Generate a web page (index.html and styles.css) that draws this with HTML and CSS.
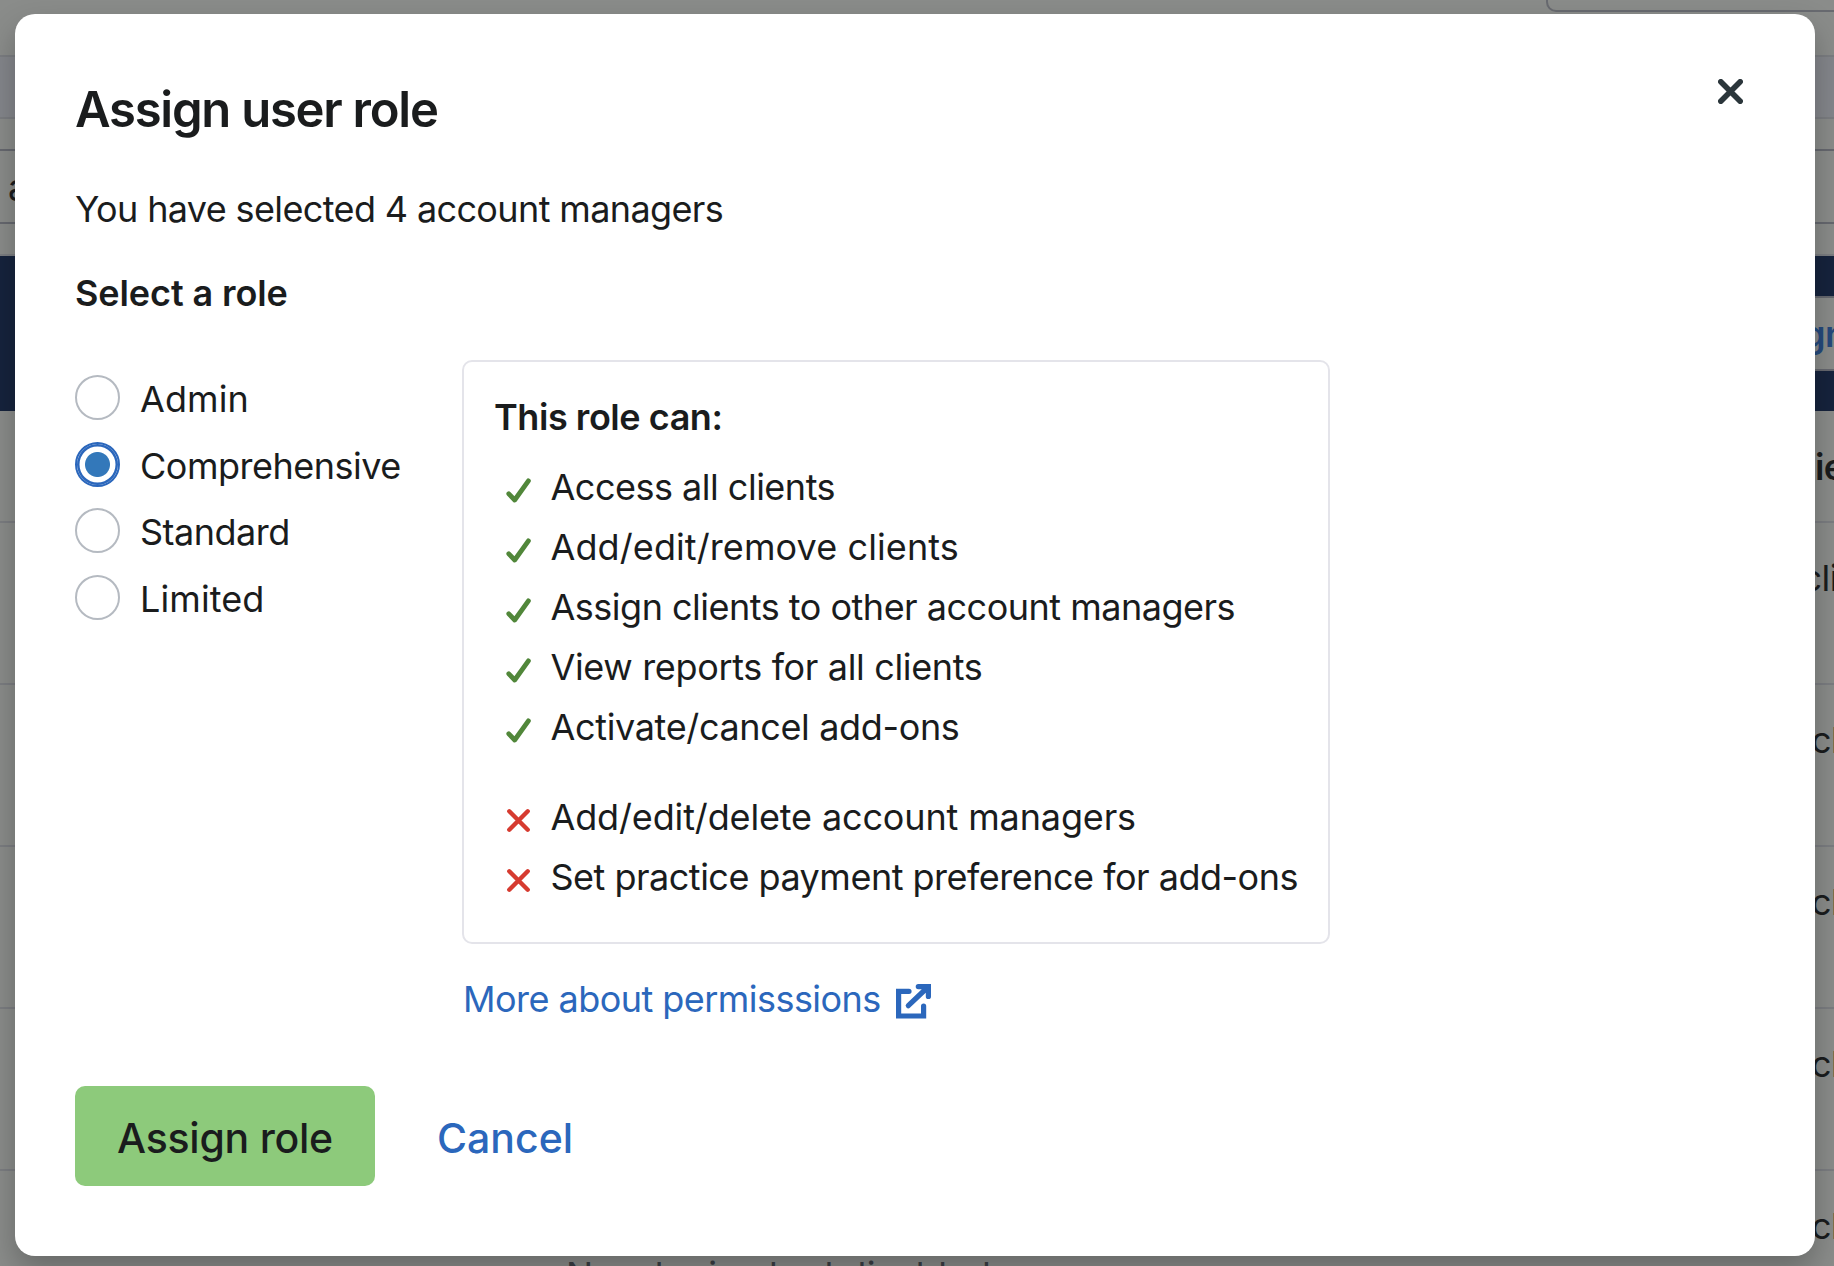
FILE: index.html
```html
<!DOCTYPE html>
<html lang="en">
<head>
    <meta charset="UTF-8">
    <meta name="viewport" content="width=device-width, initial-scale=1.0">
    <title>Assign user role</title>
    <link rel="stylesheet" href="styles.css">
</head>
<body>
    <!-- Dimmed page behind the dialog -->
    <div class="page">
        <div class="topbar"><div class="topbar-box"></div></div>
        <div class="band"></div>
        <div class="filter"><div class="filter-input">a</div></div>
        <div class="actions"><div class="actions-button">Assign</div></div>
        <div class="row row-head">Clients</div>
        <div class="row row-first">All clients</div>
        <div class="row">clients</div>
        <div class="row">clients</div>
        <div class="row">clients</div>
        <div class="row">clients<div class="row-note">New logins had disabled</div></div>
    </div>

    <div class="modal" role="dialog" aria-labelledby="modal-title">
        <button type="button" class="close" aria-label="Close">
            <svg width="25" height="25" viewBox="0 0 25 25"><path d="M2.8 2.8l19.4 19.4M22.2 2.8L2.8 22.2"/></svg>
        </button>

        <h1 id="modal-title">Assign user role</h1>
        <p class="intro">You have selected 4 account managers</p>
        <h2>Select a role</h2>

        <div class="roles">
            <div class="role-list">
                <label class="role role-short"><input type="radio" name="role">Admin</label>
                <label class="role"><input type="radio" name="role" checked>Comprehensive</label>
                <label class="role"><input type="radio" name="role">Standard</label>
                <label class="role role-short"><input type="radio" name="role">Limited</label>
            </div>

            <div class="role-info">
                <div class="panel">
                    <h3>This role can:</h3>
                    <ul class="can">
                        <li><svg viewBox="0 0 25 25"><path d="M2.8 15.8l5.9 6.2L22.4 2.9"/></svg>Access all clients</li>
                        <li class="wide"><svg viewBox="0 0 25 25"><path d="M2.8 15.8l5.9 6.2L22.4 2.9"/></svg>Add/edit/remove clients</li>
                        <li><svg viewBox="0 0 25 25"><path d="M2.8 15.8l5.9 6.2L22.4 2.9"/></svg>Assign clients to other account managers</li>
                        <li class="mid"><svg viewBox="0 0 25 25"><path d="M2.8 15.8l5.9 6.2L22.4 2.9"/></svg>View reports for all clients</li>
                        <li class="mid"><svg viewBox="0 0 25 25"><path d="M2.8 15.8l5.9 6.2L22.4 2.9"/></svg>Activate/cancel add-ons</li>
                    </ul>
                    <ul class="cannot">
                        <li class="slim"><svg viewBox="0 0 25 25"><path d="M3.3 3.3l18.4 18.4M21.7 3.3L3.3 21.7"/></svg>Add/edit/delete account managers</li>
                        <li><svg viewBox="0 0 25 25"><path d="M3.3 3.3l18.4 18.4M21.7 3.3L3.3 21.7"/></svg>Set practice payment preference for add-ons</li>
                    </ul>
                </div>
                <a class="more" href="#">More about permisssions
                    <svg width="36" height="37" viewBox="0 0 36 37"><path d="M13 8.3H2.6V33H27.6V23"/><path d="M22.3 3.6H32.4V13.4M32 4L12.3 22.7"/></svg>
                </a>
            </div>
        </div>

        <div class="buttons">
            <button type="button" class="assign">Assign role</button>
            <button type="button" class="cancel">Cancel</button>
        </div>
    </div>
</body>
</html>
```
FILE: styles.css
```css
* {
    box-sizing: border-box;
}

body {
    margin: 0;
    height: 1266px;
    overflow: hidden;
    background-color: #8a8c8a;
    color: #1a1c1d;
    font: 36px/60px Inter, "Liberation Sans", sans-serif;
    letter-spacing: -0.5px;
}

h1, h2, h3, p, ul {
    margin: 0;
    padding: 0;
}

button {
    border: none;
    padding: 0;
    font-family: inherit;
    cursor: pointer;
}

svg {
    fill: none;
    stroke: currentColor;
    stroke-linecap: round;
    flex: none;
}

/* page behind */
.page {
    width: 100%;
    height: 1266px;
    overflow: hidden;
    white-space: nowrap;
}

.topbar {
    display: flex;
    justify-content: flex-end;
    height: 55px;
}

.topbar-box {
    width: 400px;
    height: 12px;
    margin-right: -112px;
    border: 2px solid #686a70;
    border-top: none;
    border-radius: 0 0 10px 10px;
}

.band {
    height: 64px;
    background-color: #84868b;
    border-top: 2px solid #7b7d81;
    border-bottom: 2px solid #7b7d81;
}

.filter {
    height: 137px;
    padding-top: 30px;
    border-bottom: 2px solid #7b7d81;
}

.filter-input {
    height: 75px;
    padding-left: 8px;
    line-height: 73px;
    border-top: 2px solid #66686f;
    border-bottom: 2px solid #66686f;
}

.actions {
    height: 155px;
    padding-top: 40px;
    background-color: #16233d;
}

.actions-button {
    height: 75px;
    margin-left: 1600px;
    padding-left: 128px;
    line-height: 73px;
    background-color: #8a8c8a;
    border: 2px solid #66686f;
    border-right: none;
    color: #25497c;
    font-weight: 600;
}

.row {
    height: 162px;
    padding-left: 1811px;
    line-height: 111px;
    border-bottom: 2px solid #7b7d81;
}

.row-head {
    height: 112px;
    padding-left: 1780px;
    line-height: 112px;
    font-weight: 600;
}

.row-first {
    padding-left: 1751px;
}

.row-note {
    margin: -32px 0 0 -1245px;
    line-height: 50px;
    letter-spacing: 0.4px;
    color: #3a3e44;
}

/* dialog */
.modal {
    position: absolute;
    top: 14px;
    left: 15px;
    width: 1800px;
    height: 1242px;
    padding: 66px 60px 70px;
    background-color: #fff;
    border-radius: 20px;
    box-shadow: 0 14px 30px rgba(0, 0, 0, 0.25);
}

.close {
    position: absolute;
    top: 65px;
    right: 72px;
    width: 25px;
    height: 25px;
    background: none;
    color: #2b363b;
    stroke-width: 5.6;
}

.close svg {
    display: block;
}

h1 {
    font-size: 49px;
    font-weight: 600;
    letter-spacing: -1.25px;
}

.intro {
    margin-top: 39px;
    letter-spacing: -0.63px;
}

h2 {
    margin-top: 24px;
    font-size: 36px;
    font-weight: 600;
    letter-spacing: -0.1px;
}

.roles {
    display: flex;
    margin-top: 37px;
}

.role-list {
    display: flex;
    flex-direction: column;
    gap: 21.6px;
    width: 387px;
    padding-top: 15px;
}

.role {
    display: flex;
    gap: 20px;
    height: 45px;
    line-height: 49px;
}

.role-short {
    letter-spacing: 0.1px;
}

.role input {
    appearance: none;
    width: 45px;
    height: 45px;
    margin: 0;
    border: 2px solid #b5bac1;
    border-radius: 50%;
}

.role input:checked {
    border-color: #2b67bc;
    box-shadow: inset 0 0 0 2.5px #2b67bc;
    background: radial-gradient(circle, #3378ba 12px, #fff 13px);
}

.panel {
    width: 868px;
    height: 584px;
    padding: 25px 0 0 30px;
    border: 2px solid #e4e4ea;
    border-radius: 10px;
}

h3 {
    font-size: 36px;
    font-weight: 600;
    letter-spacing: -0.45px;
}

.panel ul {
    list-style: none;
    margin: 10px 0 0 12px;
}

.panel li {
    display: flex;
    align-items: center;
    gap: 19.5px;
    white-space: nowrap;
}

.panel li svg {
    width: 25px;
    height: 25px;
    margin-top: 7px;
}

.panel .can svg {
    color: #51873a;
    stroke-width: 4.8;
    stroke-linejoin: round;
}

.panel .cannot {
    margin-top: 30px;
}

.panel .cannot svg {
    color: #d63b30;
    stroke-width: 4.4;
}

.panel .wide {
    letter-spacing: 0.1px;
}

.panel .mid {
    letter-spacing: -0.35px;
}

.panel .slim {
    letter-spacing: -0.14px;
}

.more {
    display: flex;
    align-items: center;
    gap: 15px;
    width: max-content;
    margin-top: 25px;
    padding-left: 1px;
    color: #2b67bc;
    text-decoration: none;
    letter-spacing: -0.54px;
}

.more svg {
    margin-top: 5px;
    stroke-width: 5.2;
}

.buttons {
    display: flex;
    gap: 62px;
    margin-top: 57px;
}

.assign, .cancel {
    height: 100px;
    padding-top: 3px;
    font-size: 41px;
    font-weight: 500;
}

.assign {
    width: 300px;
    border-radius: 10px;
    background-color: #8dca7b;
    color: #1a1c1d;
    letter-spacing: -0.25px;
}

.cancel {
    background: none;
    color: #2b67bc;
    letter-spacing: 0;
}
```
